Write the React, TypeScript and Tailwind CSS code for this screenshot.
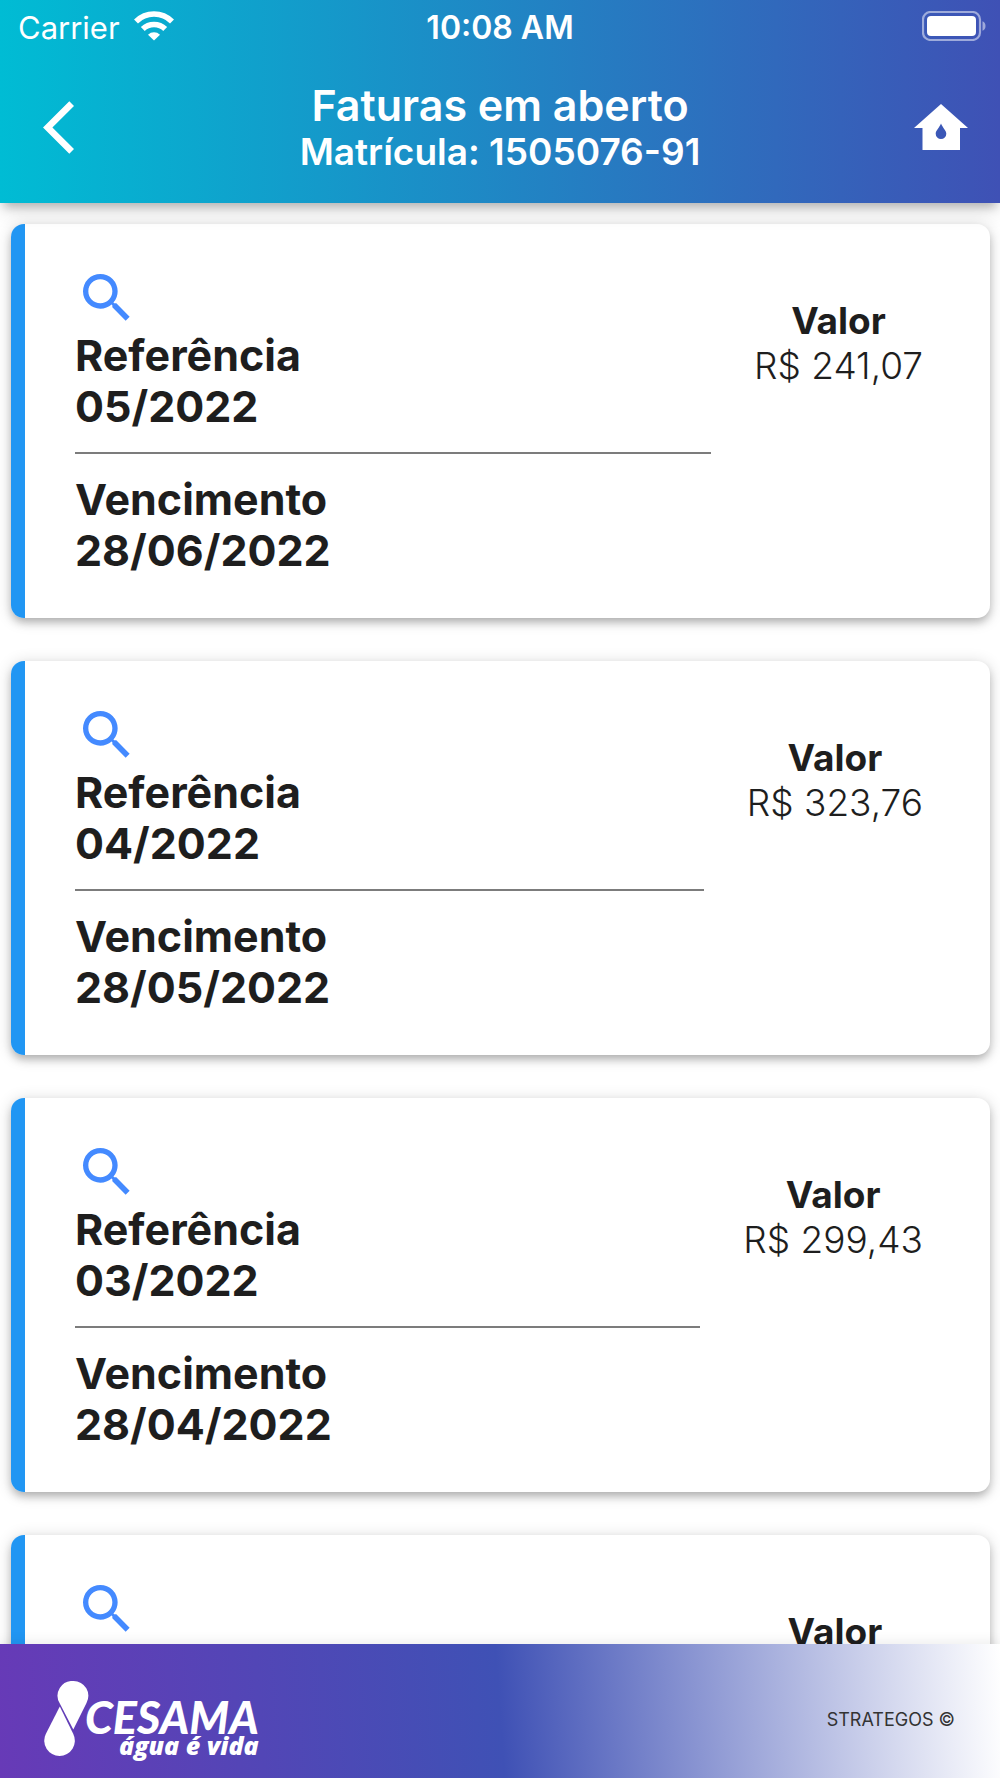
import React from "react";
import { MdSearch } from "react-icons/md";

type Invoice = { reference: string; due: string; amount: string };

const invoices: Invoice[] = [
  { reference: "05/2022", due: "28/06/2022", amount: "R$ 241,07" },
  { reference: "04/2022", due: "28/05/2022", amount: "R$ 323,76" },
  { reference: "03/2022", due: "28/04/2022", amount: "R$ 299,43" },
  { reference: "02/2022", due: "28/03/2022", amount: "R$ 323,76" },
];

function WifiIcon() {
  return (
    <svg viewBox="0 0 40 30" className="h-[30px] w-10" fill="none" aria-label="Wi-Fi">
      <path d="M2 10.500a25.500 25.500 0 0 1 36 0" stroke="white" strokeWidth="5.600" />
      <path d="M8.800 18a16 16 0 0 1 22.400 0" stroke="white" strokeWidth="5.600" />
      <path d="M20 29.500l-6-5.800a8.800 8.800 0 0 1 12 0z" fill="white" />
    </svg>
  );
}

function BatteryIcon() {
  return (
    <svg viewBox="0 0 64 30" className="h-[30px] w-16" fill="none" aria-label="Bateria">
      <rect x="1" y="1" width="57" height="28" rx="7.500" stroke="white" strokeOpacity="0.5" strokeWidth="2.200" />
      <rect x="5" y="5" width="49" height="20" rx="4" fill="white" />
      <path d="M60.500 10.200c2 .6 3 2.500 3 4.800s-1 4.200-3 4.800z" fill="white" fillOpacity="0.5" />
    </svg>
  );
}

function BackIcon() {
  return (
    <svg viewBox="0 2.100 11.670 19.800" className="h-[53px] w-[31px]" fill="white" aria-hidden="true">
      <path d="M11.670 3.870 9.900 2.100 0 12l9.900 9.900 1.770-1.770L3.540 12z" />
    </svg>
  );
}

function HomeIcon() {
  return (
    <svg viewBox="0 0 54 46" className="h-[46px] w-[54px]" fill="white" aria-hidden="true">
      <path
        fillRule="evenodd"
        d="M27 0 54 24h-8v22H8.500V24H0zM27 19.500c-1.500 4-5.300 7-5.300 10.300a5.300 5.300 0 0 0 10.600 0c0-3.300-3.800-6.300-5.300-10.300z"
      />
    </svg>
  );
}

function Header() {
  return (
    <header className="relative z-10 bg-[linear-gradient(90deg,#00bcd4,#3f51b5)] text-white shadow-[0_8px_9px_-4px_rgba(0,0,0,0.22),0_10px_20px_-2px_rgba(0,0,0,0.12)]">
      <div className="grid h-[54px] grid-cols-[1fr_auto_1fr] items-start px-[14px] pt-[11px] leading-[34px]">
        <div className="flex items-start gap-[14px] pl-1">
          <span className="text-[31px]">Carrier</span>
          <WifiIcon />
        </div>
        <span className="text-[32px] font-semibold">10:08 AM</span>
        <div className="flex justify-end">
          <BatteryIcon />
        </div>
      </div>
      <div className="grid grid-cols-[1fr_auto_1fr] items-center px-8 pt-[26px] pb-[29px]">
        <button type="button" aria-label="Voltar" className="justify-self-start pl-[11px]">
          <BackIcon />
        </button>
        <div className="text-center font-semibold">
          <h1 className="text-[43px] leading-[50px]">Faturas em aberto</h1>
          <p className="text-[37px] leading-[44px]">Matrícula: 1505076-91</p>
        </div>
        <button type="button" aria-label="Início" className="justify-self-end">
          <HomeIcon />
        </button>
      </div>
    </header>
  );
}

function InvoiceCard({ invoice }: { invoice: Invoice }) {
  return (
    <article className="flex overflow-hidden rounded-[13px] bg-white shadow-[0_5px_8px_-1px_rgba(0,0,0,0.24),0_2px_16px_rgba(0,0,0,0.16)]">
      <div className="w-[14px] shrink-0 bg-[#2196f3]" />
      <div className="flex flex-1 items-start gap-[43px] pt-[42px] pr-[67px] pb-[42px] pl-[50px]">
        <div className="flex-1 text-[43px] leading-[51px] font-bold">
          <button type="button" aria-label={`Ver fatura ${invoice.reference}`} className="block text-[#448aff]">
            <MdSearch className="size-16" />
          </button>
          <h2>Referência</h2>
          <p>{invoice.reference}</p>
          <hr className="my-5 border-t-2 border-[#7c7c7c]" />
          <h2>Vencimento</h2>
          <p>{invoice.due}</p>
        </div>
        <div className="pt-8 text-center text-[37px] leading-[45px]">
          <h3 className="font-bold">Valor</h3>
          <p className="font-[350]">{invoice.amount}</p>
        </div>
      </div>
    </article>
  );
}

function Logo() {
  return (
    <div className="flex items-start text-white" aria-label="CESAMA água é vida">
      <svg viewBox="0 0 45 76" className="h-[76px] w-[45px] shrink-0" fill="white" aria-hidden="true">
        <path d="M29.500 0A14.800 14.800 0 0 1 42.500 22L29.300 48.500 15.800 22.500A14.800 14.800 0 0 1 29.500 0z" />
        <path d="M15.800 25.500 29.300 53A15.300 15.300 0 1 1 1.800 53z" />
      </svg>
      <div className="-ml-1 pt-4 text-right italic">
        <div className="font-['Lato',sans-serif] text-[45px] leading-[40px] font-black">CESAMA</div>
        <div className="font-['Open_Sans',sans-serif] text-[25px] leading-[16px] font-extrabold">água é vida</div>
      </div>
    </div>
  );
}

function Footer() {
  return (
    <footer className="relative z-10 flex h-[134px] shrink-0 items-center justify-between bg-[linear-gradient(86deg,#673ab7_0%,#3f51b5_50%,#ffffff_100%)] pt-4 pr-[45px] pl-[44px] shadow-[0_-2px_12px_rgba(0,0,0,0.08)]">
      <Logo />
      <span className="text-[18px] text-[#333]">STRATEGOS ©</span>
    </footer>
  );
}

export default function App() {
  return (
    <div className="flex h-screen flex-col bg-white font-['Inter',sans-serif] text-[#1e1e1e]">
      <Header />
      <main className="flex min-h-0 flex-1 flex-col gap-[43px] overflow-y-auto pt-[21px] pr-[10px] pb-6 pl-[11px] [scrollbar-width:none] *:shrink-0">
        {invoices.map((invoice) => (
          <InvoiceCard key={invoice.reference} invoice={invoice} />
        ))}
      </main>
      <Footer />
    </div>
  );
}
